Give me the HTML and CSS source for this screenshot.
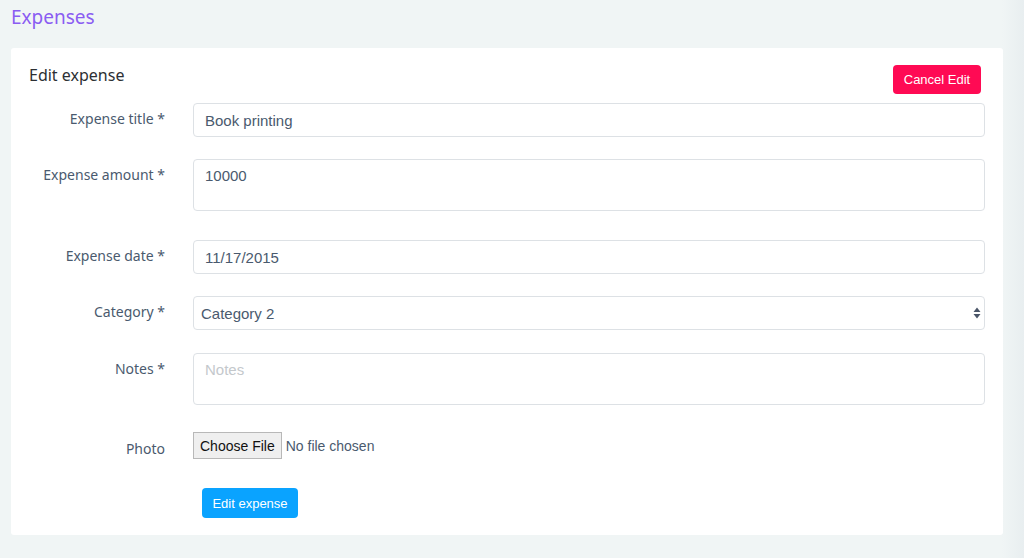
FILE: index.html
```html
<!DOCTYPE html>
<html lang="en">
<head>
    <meta charset="UTF-8">
    <meta name="viewport" content="width=device-width, initial-scale=1.0">
    <title>Expenses</title>
    <link rel="stylesheet" href="styles.css">
</head>
<body>
    <h2 class="page-title">Expenses</h2>
    <div class="card">
        <div class="card-head">
            <h3>Edit expense</h3>
            <button class="btn btn-cancel">Cancel Edit</button>
        </div>
        <form class="expense-form">
            <label class="row-label">Expense title *</label>
            <input class="field" type="text" value="Book printing">

            <label class="row-label">Expense amount *</label>
            <textarea class="field area amount">10000</textarea>

            <label class="row-label">Expense date *</label>
            <input class="field" type="text" value="11/17/2015">

            <label class="row-label">Category *</label>
            <div class="select-wrap">
                <select class="field">
                    <option>Category 1</option>
                    <option selected>Category 2</option>
                </select>
                <svg class="caret" width="8" height="12" viewBox="0 0 8 12"><path d="M4 0.5 L7.5 5 L0.5 5 Z M4 11.5 L7.5 7 L0.5 7 Z" fill="#4a5568"/></svg>
            </div>

            <label class="row-label">Notes *</label>
            <textarea class="field area notes" placeholder="Notes"></textarea>

            <label class="row-label photo-label">Photo</label>
            <div class="file-row">
                <span class="file-btn">Choose File</span>
                <span class="file-text">No file chosen</span>
            </div>

            <span></span>
            <div class="submit-row">
                <button type="button" class="btn btn-submit">Edit expense</button>
            </div>
        </form>
    </div>
</body>
</html>
```

FILE: styles.css
```css
body {
    margin: 0;
    padding: 0 21px 0 11px;
    font-family: "Noto Sans", Arial, sans-serif;
    background: linear-gradient(to right, #f0f5f5 0, #f0f5f5 calc(100% - 22px), #e8eef0 100%);
    height: 558px;
    overflow: hidden;
}
.page-title {
    margin: 0;
    padding-top: 4px;
    height: 44px;
    font-size: 19px;
    font-weight: 400;
    color: #8a5cf2;
}
.card {
    background: #fff;
    border-radius: 3px;
    padding: 16px 18px 18px 18px;
    height: 453px;
}
.card-head {
    display: flex;
    justify-content: space-between;
    align-items: flex-start;
}
.card-head h3 {
    margin: 0;
    font-size: 16px;
    font-weight: 400;
    color: #2c2f33;
}
.btn {
    border: none;
    border-radius: 4px;
    color: #fff;
    font-family: "Liberation Sans", Arial, sans-serif;
    font-size: 13px;
    cursor: pointer;
}
.btn-cancel {
    background-color: #ff0a54;
    width: 88px;
    height: 29px;
    margin-top: 1px;
    margin-right: 4px;
}
.expense-form {
    display: grid;
    grid-template-columns: 136px 1fr;
    column-gap: 28px;
    margin-top: 9px;
}
.row-label {
    text-align: right;
    font-size: 14px;
    color: #4a5a6e;
    padding-top: 6px;
}
.field {
    box-sizing: border-box;
    width: 100%;
    height: 34px;
    border: 1px solid #dde1e5;
    border-radius: 4px;
    padding: 0 11px;
    font-family: "Liberation Sans", Arial, sans-serif;
    font-size: 15px;
    color: #4a5a6e;
    background: #fff;
    margin-bottom: 22px;
    outline: none;
}
.area {
    height: 52px;
    padding-top: 7px;
    resize: none;
    display: block;
}
.amount {
    margin-bottom: 29px;
}
.notes {
    margin-bottom: 0;
}
.area::placeholder {
    color: #c4c8cc;
}
.select-wrap {
    position: relative;
}
select.field {
    appearance: none;
    -webkit-appearance: none;
    padding-left: 7px;
    margin-bottom: 23px;
}
.caret {
    position: absolute;
    right: 4px;
    top: 11px;
}
.photo-label {
    padding-top: 34px;
}
.file-row {
    display: flex;
    align-items: center;
    gap: 4px;
    margin-top: 27px;
    height: 27px;
    font-family: "Liberation Sans", Arial, sans-serif;
    font-size: 14px;
}
.file-btn {
    box-sizing: border-box;
    height: 27px;
    padding: 0 6px;
    display: flex;
    align-items: center;
    background: #efefef;
    border: 1px solid #b8b8b8;
    color: #111;
}
.file-text {
    color: #4a5a6e;
}
.submit-row {
    margin-top: 29px;
    padding-left: 9px;
}
.btn-submit {
    background-color: #0aa3ff;
    width: 96px;
    height: 30px;
}
```
